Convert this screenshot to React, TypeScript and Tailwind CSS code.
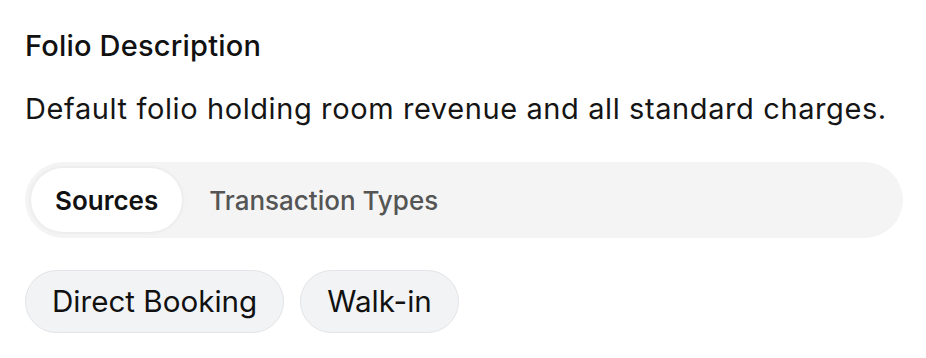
import React from "react";

export default function App() {
  return (
    <div className="min-h-[358px] w-[926px] bg-white px-[25px] pt-[27px] text-[#111111]" style={{ fontFamily: "Inter, 'Liberation Sans', sans-serif" }}>
      <h2 className="text-[29px] font-medium leading-[38px] tracking-[0.2px]">Folio Description</h2>
      <p className="mt-[24px] text-[29px] leading-[40px] tracking-[0.6px] text-[#151515]">
        Default folio holding room revenue and all standard charges.
      </p>
      <div className="mt-[33px] flex h-[76px] w-[878px] items-center rounded-full bg-[#f4f4f4] p-[6px]">
        <div className="flex h-full items-center rounded-full bg-white px-[24px] text-[26px] font-semibold text-[#111] shadow-[0_0_4px_rgba(0,0,0,0.08)]">
          Sources
        </div>
        <div className="flex h-full items-center px-[27px] text-[26px] font-medium text-[#555555]">
          Transaction Types
        </div>
      </div>
      <div className="mt-[32px] flex gap-[16px]">
        <span className="flex h-[63px] items-center rounded-full border border-[#e3e4e7] bg-[#f2f3f5] px-[26px] text-[29.6px] text-[#111]">
          Direct Booking
        </span>
        <span className="flex h-[63px] items-center rounded-full border border-[#e3e4e7] bg-[#f2f3f5] px-[26px] text-[29.6px] text-[#111]">
          Walk-in
        </span>
      </div>
    </div>
  );
}
